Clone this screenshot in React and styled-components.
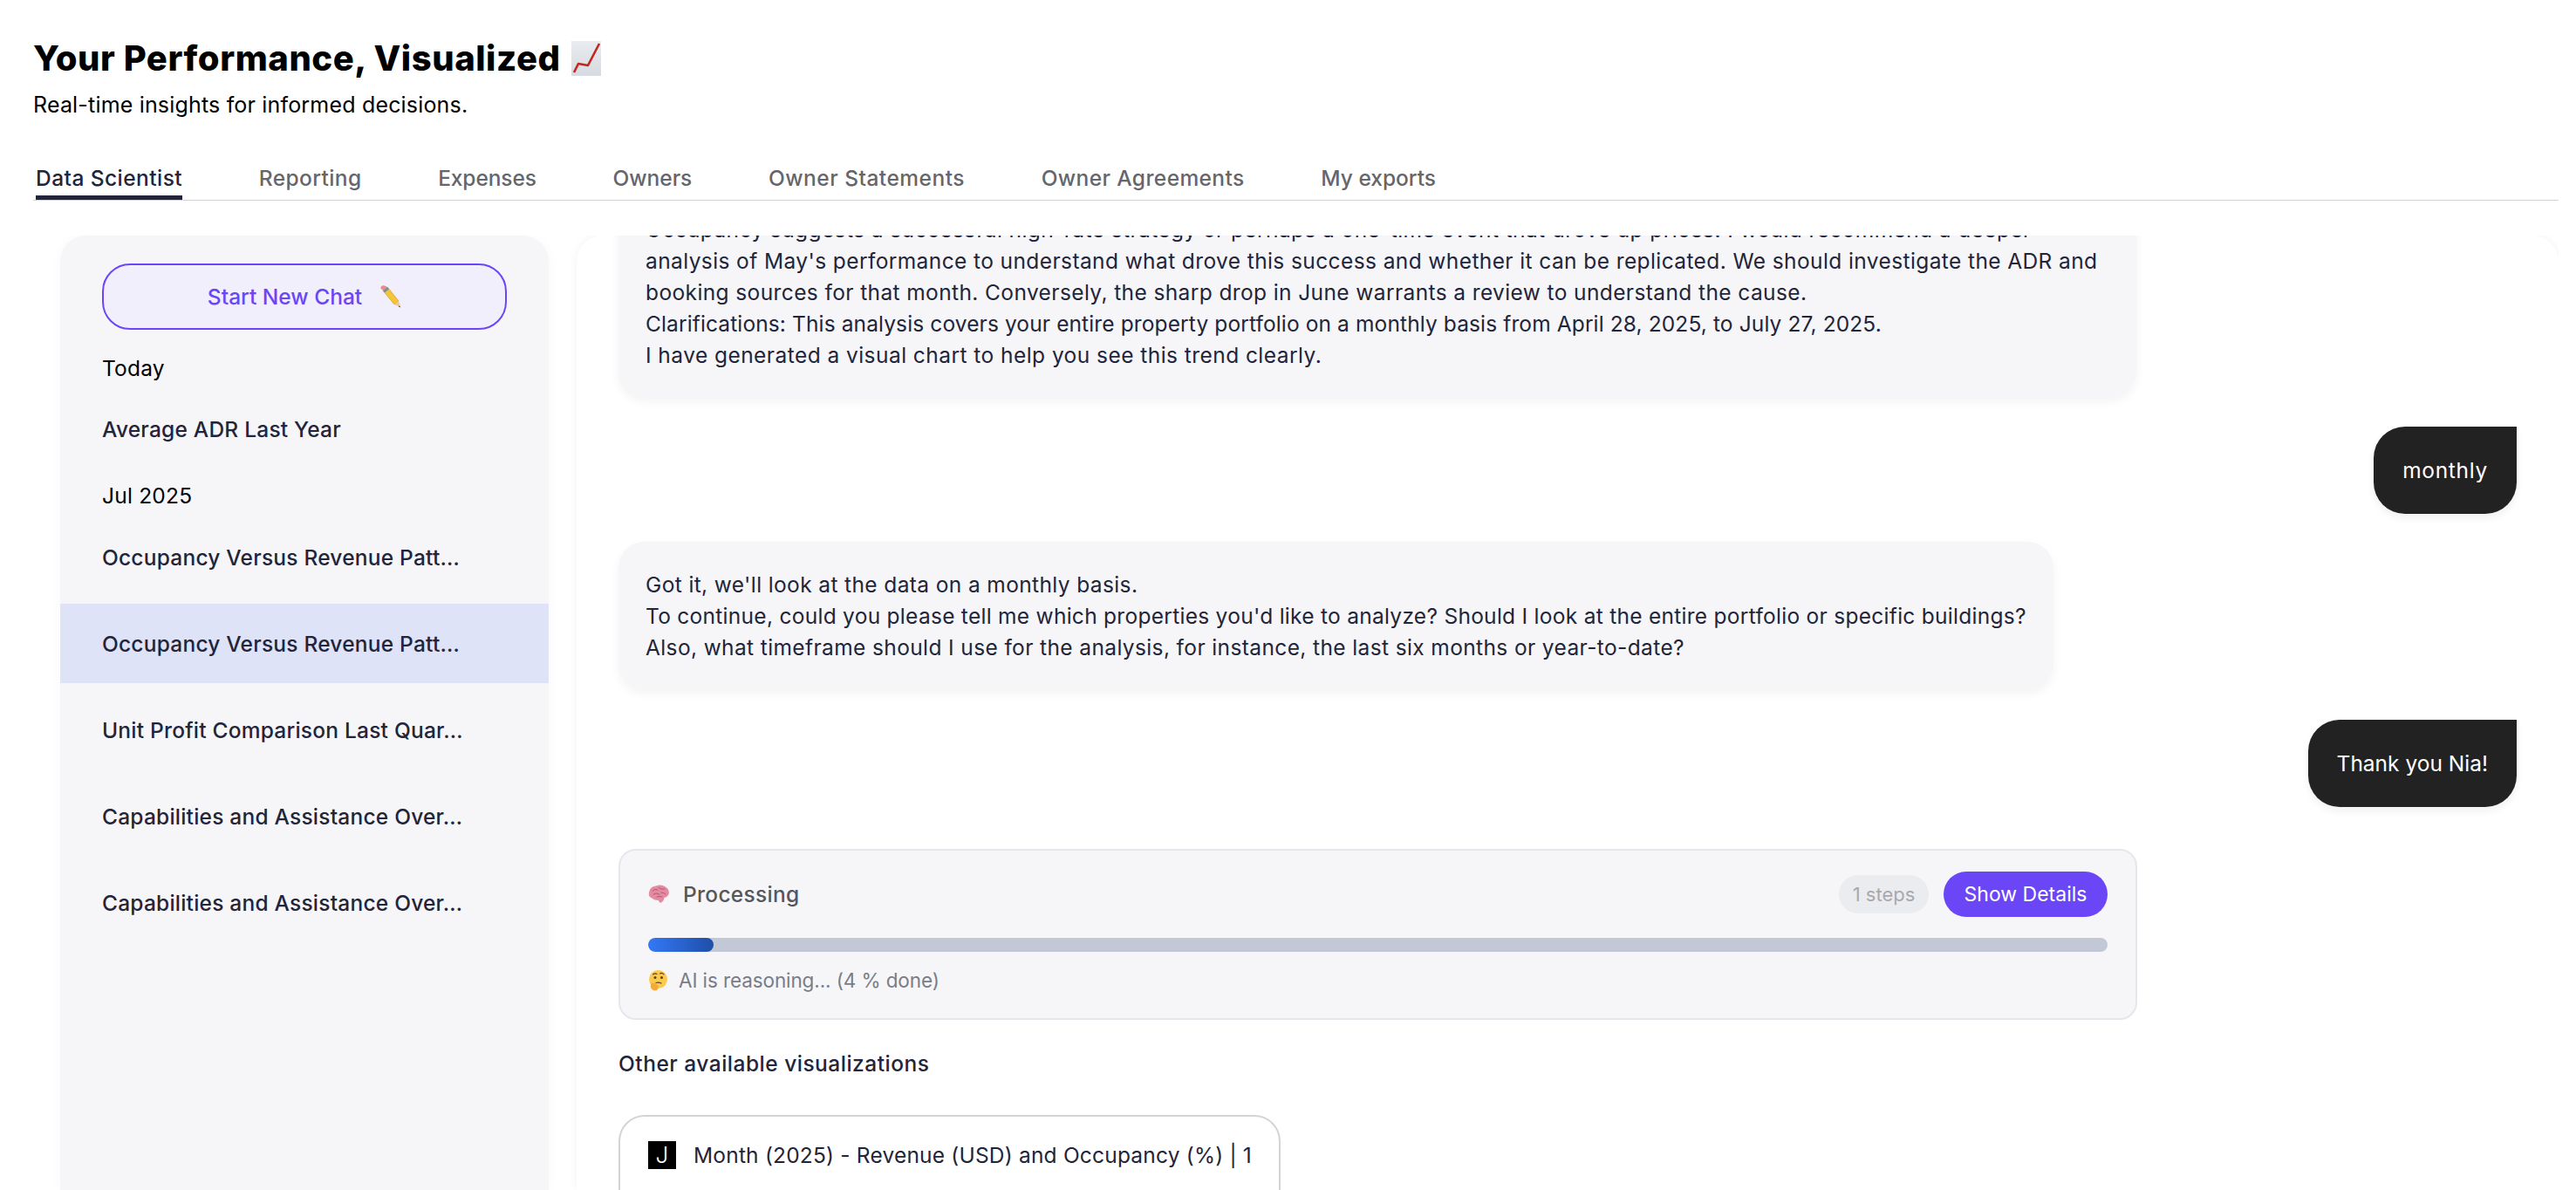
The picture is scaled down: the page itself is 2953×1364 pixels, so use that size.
import React from 'react'
import styled, { createGlobalStyle } from 'styled-components'

const GlobalStyle = createGlobalStyle`
    html, body {
        margin: 0;
        padding: 0;
        background: #fff;
    }
    * {
        box-sizing: border-box;
    }
`;

const Page = styled.div`
    height: 1364px;
    overflow: hidden;
    padding: 37px 20px 0 38px;
    font-family: Inter, "Liberation Sans", sans-serif;
    font-size: 24.5px;
    line-height: 36px;
    color: #22253a;
    display: flex;
    flex-direction: column;
`;

const Title = styled.h1`
    margin: 0;
    height: 60px;
    font-size: 40px;
    line-height: 60px;
    font-weight: 800;
    color: #000;
    display: flex;
    align-items: center;
    gap: 12px;
    letter-spacing: 0.55px;
`;

const Subtitle = styled.p`
    margin: 5px 0 0;
    font-size: 25px;
    color: #000;
    font-weight: 400;
    letter-spacing: 0.18px;
`;

const Tabs = styled.nav`
    display: flex;
    gap: 87.6px;
    margin-top: 40px;
    padding-left: 3px;
    border-bottom: 1px solid #d3d3d6;
    height: 52px;
`;

const Tab = styled.div`
    height: 51px;
    padding-top: 8px;
    font-size: 24.5px;
    font-weight: 500;
    letter-spacing: ${(props) => props.$ls}px;
    color: ${(props) => (props.$active ? '#22253a' : '#65666b')};
    border-bottom: 5px solid ${(props) => (props.$active ? '#22253a' : 'transparent')};
    white-space: nowrap;
`;

const Body = styled.div`
    flex: 1;
    min-height: 0;
    display: flex;
    gap: 32px;
    margin-top: 40px;
    padding-left: 31px;
    overflow: hidden;
`;

const Sidebar = styled.aside`
    width: 560px;
    flex: none;
    padding-top: 32px;
    background: #f6f6f9;
    border-radius: 30px 30px 0 0;
    box-shadow: 0 0 14px rgba(0, 0, 0, 0.03);
    letter-spacing: 0.22px;
`;

const NewChat = styled.button`
    display: flex;
    align-items: center;
    justify-content: center;
    gap: 19px;
    width: 464px;
    height: 76px;
    margin: 0 48px 26px;
    border: 2px solid #6b46f6;
    border-radius: 32px;
    background: #f1effb;
    color: #6b46f6;
    font: inherit;
    font-weight: 500;
`;

const DateLabel = styled.div`
    padding-left: 48px;
    color: #000;
    margin-bottom: ${(props) => props.$after || 0}px;
`;

const HistoryRow = styled.div`
    height: 91px;
    margin-bottom: ${(props) => props.$after ?? 8}px;
    padding-left: 48px;
    display: flex;
    align-items: center;
    font-weight: 500;
    white-space: nowrap;
    background: ${(props) => (props.$selected ? '#dfe3f7' : 'transparent')};
`;

const Main = styled.main`
    flex: 1;
    min-width: 0;
    overflow: hidden;
    padding: 0 48px;
    border-radius: 30px 30px 0 0;
    background: #fff;
    box-shadow: 0 0 12px rgba(0, 0, 0, 0.05);
    display: flex;
    flex-direction: column;
    align-items: flex-start;
`;

const AiBubble = styled.div`
    flex: none;
    width: ${(props) => props.$width}px;
    margin-top: ${(props) => props.$top}px;
    padding: 31px 31px 30px;
    background: #f6f6f9;
    border-radius: 30px;
    box-shadow: 0 5px 12px rgba(0, 0, 0, 0.05);
`;

const Line = styled.div`
    white-space: nowrap;
    letter-spacing: ${(props) => props.$ls}px;
`;

const UserBubble = styled.div`
    flex: none;
    align-self: flex-end;
    height: 100px;
    margin-top: ${(props) => props.$top}px;
    padding: 0 33px;
    display: flex;
    align-items: center;
    background: #222;
    color: #fff;
    letter-spacing: ${(props) => props.$ls}px;
    border-radius: 36px 0 36px 36px;
    box-shadow: 0 5px 10px rgba(0, 0, 0, 0.06);
`;

const ProgressCard = styled.section`
    flex: none;
    width: 1741px;
    height: 196px;
    margin-top: 48px;
    padding: 24px 32px 0;
    background: #f6f6f9;
    border: 2px solid #e6e6ec;
    border-radius: 20px;
`;

const ProgressHead = styled.div`
    display: flex;
    align-items: center;
    height: 52px;
`;

const ProgressName = styled.div`
    margin-left: 16px;
    color: #55565c;
    font-weight: 500;
    letter-spacing: 0.3px;
`;

const Steps = styled.div`
    margin-left: auto;
    width: 103px;
    height: 44px;
    border-radius: 22px;
    background: #ebecef;
    color: #a8a9ad;
    font-size: 22px;
    line-height: 44px;
    text-align: center;
`;

const DetailsButton = styled.button`
    width: 188px;
    height: 52px;
    margin-left: 17px;
    border: none;
    border-radius: 26px;
    background: #6b46f6;
    color: #fff;
    font: inherit;
    font-size: 23px;
    font-weight: 400;
`;

const Track = styled.div`
    height: 16px;
    margin-top: 24px;
    border-radius: 8px;
    background: #c2c8d6;
    overflow: hidden;
`;

const Fill = styled.div`
    height: 100%;
    border-radius: 8px;
    background: linear-gradient(90deg, #3478f6, #1e4fa8);
`;

const Status = styled.div`
    display: flex;
    align-items: center;
    gap: 12px;
    margin-top: 15px;
    font-size: 22.5px;
    letter-spacing: -0.1px;
    color: #787d88;
`;

const SectionLabel = styled.div`
    flex: none;
    margin-top: 32px;
    font-weight: 500;
    letter-spacing: 0.5px;
`;

const VizCard = styled.div`
    flex: none;
    width: 759px;
    height: 130px;
    margin-top: 41px;
    padding: 28px 32px 0;
    display: flex;
    align-items: flex-start;
    gap: 20px;
    border: 2px solid #d4d4d8;
    border-radius: 30px;
    white-space: nowrap;
    line-height: 32px;
    letter-spacing: 0.2px;
`;

const VizBadge = styled.div`
    width: 32px;
    height: 32px;
    flex: none;
    background: #000;
    color: #fff;
    font-size: 26px;
    font-weight: 300;
    line-height: 31px;
    text-align: center;
`;

const ChartEmoji = () => (
    <svg width="34" height="40" viewBox="0 0 34 40">
        <defs>
            <linearGradient id="chartBg" x1="0" y1="0" x2="0" y2="1">
                <stop offset="0" stopColor="#e9ecf0" />
                <stop offset="1" stopColor="#d6dbe1" />
            </linearGradient>
        </defs>
        <rect width="34" height="40" fill="url(#chartBg)" />
        <path d="M3 36 L8 26 L19 28 L32 3" fill="none" stroke="#c0271f" strokeWidth="2.6" strokeLinejoin="round" />
    </svg>
);

const PencilEmoji = () => (
    <svg width="26" height="26" viewBox="0 0 26 26">
        <path d="M5 6 L10 2 L23 18 L18 22 Z" fill="#f4c534" stroke="#c98f16" strokeWidth="0.6" />
        <path d="M5 6 L10 2 L12 4.6 L7 8.6 Z" fill="#7a8fa6" />
        <path d="M2.5 3.4 Q2 1.5 4 0.6 Q6 -0.3 8 1 L10 2 L5 6 Z" fill="#e88a92" />
        <path d="M18 22 L23 18 L25.5 25.5 Z" fill="#e9c9a0" />
        <path d="M23.6 23.4 L25.5 25.5 L22.7 24.2 Z" fill="#222" />
    </svg>
);

const BrainEmoji = () => (
    <svg width="24" height="22" viewBox="0 0 24 22">
        <path d="M1 9 Q2 2 9 1.5 Q14 -0.5 19 2 Q24.5 5 23.8 10 Q23 14 18.5 15 Q18 19 15 20.5 Q12.5 21.5 12 18 Q7 18 4.5 15.5 Q0 14 1 9 Z" fill="#e58ba1" />
        <path d="M5 7 Q8 4 11 6 M12 3.5 Q15 6 19 5 M6 11 Q10 9 13 11 M15 9 Q18 9 20 11 M10 14 Q13 13 16 14" fill="none" stroke="#b9566f" strokeWidth="1" strokeLinecap="round" />
    </svg>
);

const ThinkingEmoji = () => (
    <svg width="23" height="24" viewBox="0 0 23 24">
        <circle cx="11.5" cy="10.5" r="10.5" fill="#fbc94b" />
        <circle cx="8" cy="8.5" r="1.5" fill="#5b4320" />
        <circle cx="15.5" cy="8.5" r="1.5" fill="#5b4320" />
        <path d="M5.5 5 Q8 3 10 4.5 M13.5 4 Q16 2.5 18 5" fill="none" stroke="#5b4320" strokeWidth="1.1" strokeLinecap="round" />
        <path d="M9 14.5 Q12 13.5 15 15" fill="none" stroke="#5b4320" strokeWidth="1.2" strokeLinecap="round" />
        <path d="M4 15 Q9 14.5 11 17 Q13 20 10 23 Q6 24.5 3.5 21 Q2 18 4 15 Z" fill="#f5a93a" />
    </svg>
);

const history = [
    { text: 'Occupancy Versus Revenue Patt…' },
    { text: 'Occupancy Versus Revenue Patt…', selected: true },
    { text: 'Unit Profit Comparison Last Quar…' },
    { text: 'Capabilities and Assistance Over…' },
    { text: 'Capabilities and Assistance Over…' },
];

const tabs = [
    { name: 'Data Scientist', ls: 0.45 },
    { name: 'Reporting', ls: 0.4 },
    { name: 'Expenses', ls: -0.1 },
    { name: 'Owners', ls: 0 },
    { name: 'Owner Statements', ls: 0.5 },
    { name: 'Owner Agreements', ls: 0.4 },
    { name: 'My exports', ls: 0 },
];

export default function App() {
    return (
        <Page>
            <GlobalStyle />
            <Title>
                Your Performance, Visualized
                <ChartEmoji />
            </Title>
            <Subtitle>Real-time insights for informed decisions.</Subtitle>
            <Tabs>
                {tabs.map((tab, i) => (
                    <Tab key={tab.name} $active={i === 0} $ls={tab.ls}>{tab.name}</Tab>
                ))}
            </Tabs>
            <Body>
                <Sidebar>
                    <NewChat>
                        Start New Chat
                        <PencilEmoji />
                    </NewChat>
                    <DateLabel $after={6}>Today</DateLabel>
                    <HistoryRow $after={13}>Average ADR Last Year</HistoryRow>
                    <DateLabel $after={7}>Jul 2025</DateLabel>
                    {history.map((row, i) => (
                        <HistoryRow key={i} $selected={row.selected}>{row.text}</HistoryRow>
                    ))}
                </Sidebar>
                <Main>
                    <AiBubble $width={1740} $top={-56}>
                        <Line $ls={0.4}>Occupancy suggests a successful high-rate strategy or perhaps a one-time event that drove up prices. I would recommend a deeper</Line>
                        <Line $ls={0.4}>analysis of May's performance to understand what drove this success and whether it can be replicated. We should investigate the ADR and</Line>
                        <Line $ls={0.39}>booking sources for that month. Conversely, the sharp drop in June warrants a review to understand the cause.</Line>
                        <Line $ls={0.12}>Clarifications: This analysis covers your entire property portfolio on a monthly basis from April 28, 2025, to July 27, 2025.</Line>
                        <Line $ls={0.45}>I have generated a visual chart to help you see this trend clearly.</Line>
                    </AiBubble>
                    <UserBubble $top={34} $ls={0.7}>monthly</UserBubble>
                    <AiBubble $width={1645} $top={32}>
                        <Line $ls={0.38}>Got it, we'll look at the data on a monthly basis.</Line>
                        <Line $ls={0.28}>To continue, could you please tell me which properties you'd like to analyze? Should I look at the entire portfolio or specific buildings?</Line>
                        <Line $ls={0.38}>Also, what timeframe should I use for the analysis, for instance, the last six months or year-to-date?</Line>
                    </AiBubble>
                    <UserBubble $top={35} $ls={0}>Thank you Nia!</UserBubble>
                    <ProgressCard>
                        <ProgressHead>
                            <BrainEmoji />
                            <ProgressName>Processing</ProgressName>
                            <Steps>1 steps</Steps>
                            <DetailsButton>Show Details</DetailsButton>
                        </ProgressHead>
                        <Track>
                            <Fill style={{ width: '4.5%' }} />
                        </Track>
                        <Status>
                            <ThinkingEmoji />
                            AI is reasoning... (4 % done)
                        </Status>
                    </ProgressCard>
                    <SectionLabel>Other available visualizations</SectionLabel>
                    <VizCard>
                        <VizBadge>J</VizBadge>
                        Month (2025) - Revenue (USD) and Occupancy (%) | 1
                    </VizCard>
                </Main>
            </Body>
        </Page>
    )
}
